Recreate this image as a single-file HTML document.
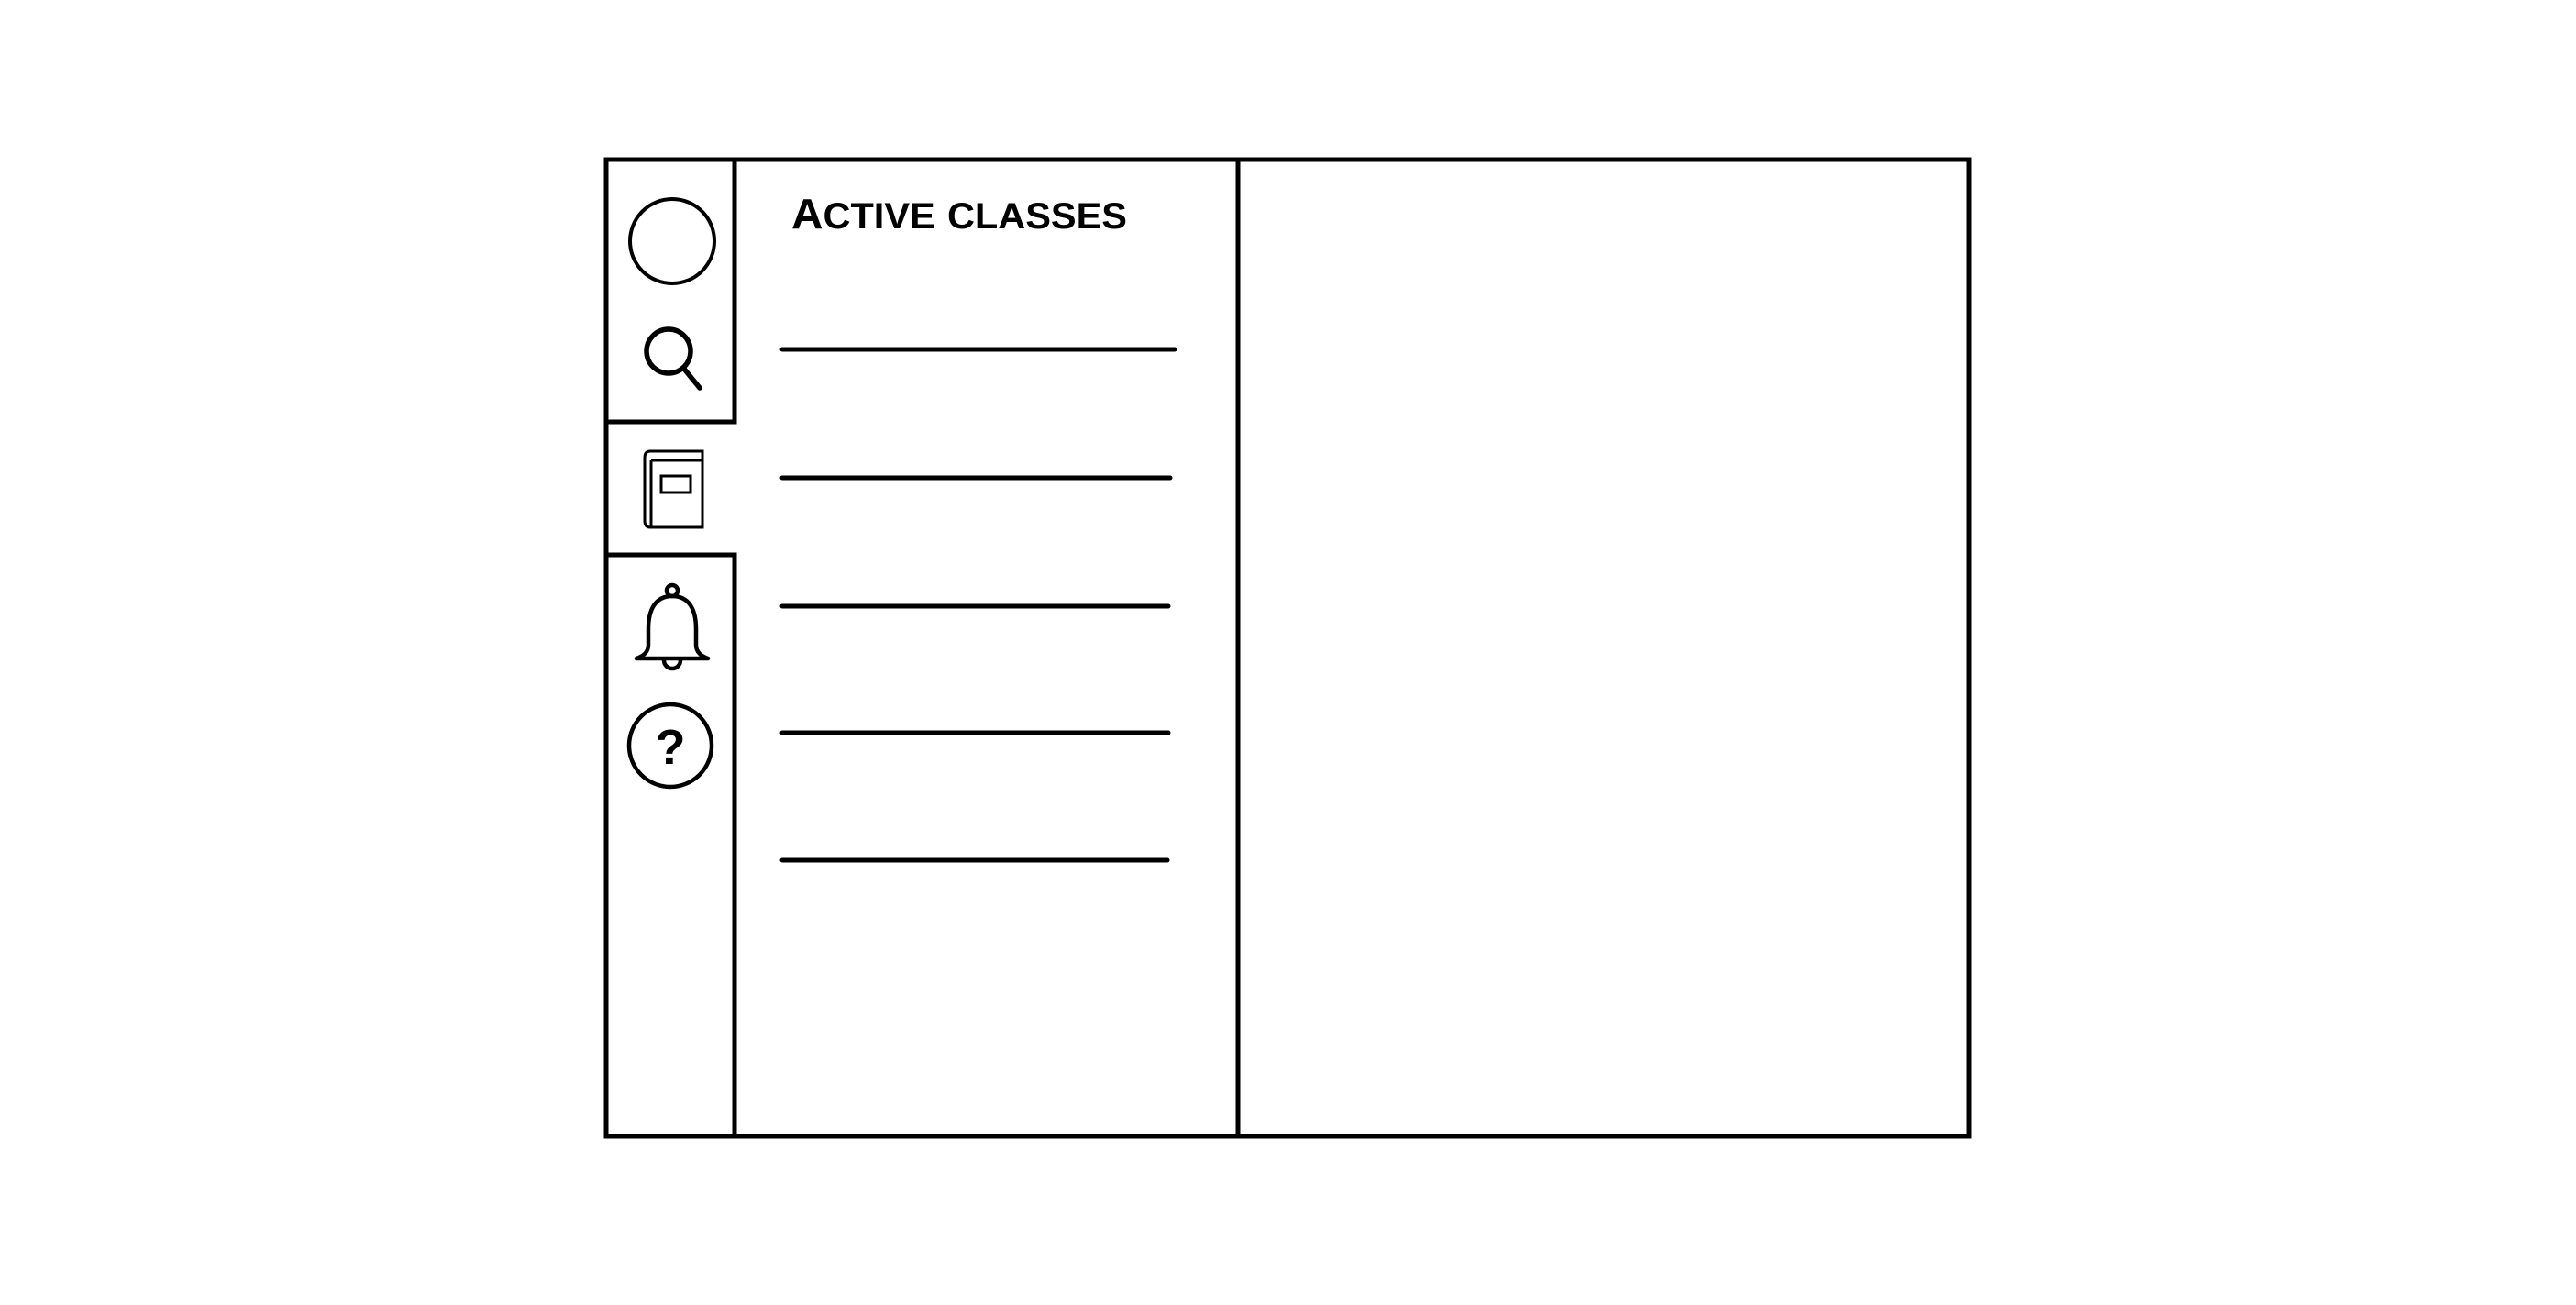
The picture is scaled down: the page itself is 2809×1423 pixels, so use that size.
<!DOCTYPE html>
<html><head><meta charset="utf-8"><style>html,body{margin:0;padding:0;background:#fff;}svg{display:block}</style></head>
<body>
<svg width="2809" height="1423" viewBox="0 0 2809 1423" xmlns="http://www.w3.org/2000/svg">
<rect width="2809" height="1423" fill="#fff"/>
<g stroke="#000" stroke-width="5" fill="none" stroke-linecap="square">
<rect x="661" y="174" width="1486" height="1065"/>
<line x1="1350" y1="174" x2="1350" y2="1239"/>
<line x1="801" y1="174" x2="801" y2="460"/>
<line x1="661" y1="460" x2="801" y2="460"/>
<line x1="661" y1="605" x2="801" y2="605"/>
<line x1="801" y1="605" x2="801" y2="1239"/>
</g>
<g stroke="#000" stroke-width="5" stroke-linecap="round">
<line x1="853" y1="381" x2="1281" y2="381"/>
<line x1="853" y1="521" x2="1276" y2="521"/>
<line x1="853" y1="661" x2="1274" y2="661"/>
<line x1="853" y1="799" x2="1274" y2="799"/>
<line x1="853" y1="938" x2="1273" y2="938"/>
</g>
<g fill="none" stroke="#000">
<ellipse cx="733" cy="263" rx="46" ry="46" stroke-width="4"/>
<circle cx="729" cy="383" r="24" stroke-width="5.5"/>
<line x1="745" y1="401" x2="763" y2="423" stroke-width="5.5" stroke-linecap="round"/>
<g stroke-width="3">
<path d="M703 499 Q703 492 709 492 L766 492 L766 575 L709 575 Q703 575 703 568 Z"/>
<line x1="710" y1="502" x2="710" y2="575"/>
<line x1="710" y1="502" x2="766" y2="502"/>
<rect x="721" y="519" width="32" height="18"/>
</g>
<g stroke-width="4.5">
<circle cx="733" cy="644" r="6"/>
<path d="M733 650 C715 650 707 664 707 686 L707 703 C707 711 702 715 694 718 L772 718 C764 715 759 711 759 703 L759 686 C759 664 751 650 733 650 Z" stroke-linejoin="round"/>
<path d="M724 720 A9 9 0 0 0 742 720"/>
</g>
<circle cx="731" cy="813" r="45" stroke-width="4.5"/>
</g>
<text x="731" y="833" text-anchor="middle" font-family="Liberation Sans, sans-serif" font-weight="bold" font-size="54" fill="#000">?</text>
<text x="863" y="249" font-family="Liberation Sans, sans-serif" font-weight="bold" font-size="46" fill="#000" textLength="366" lengthAdjust="spacingAndGlyphs">A<tspan font-size="40">CTIVE</tspan> <tspan font-size="40">CLASSES</tspan></text>
</svg>
</body></html>
